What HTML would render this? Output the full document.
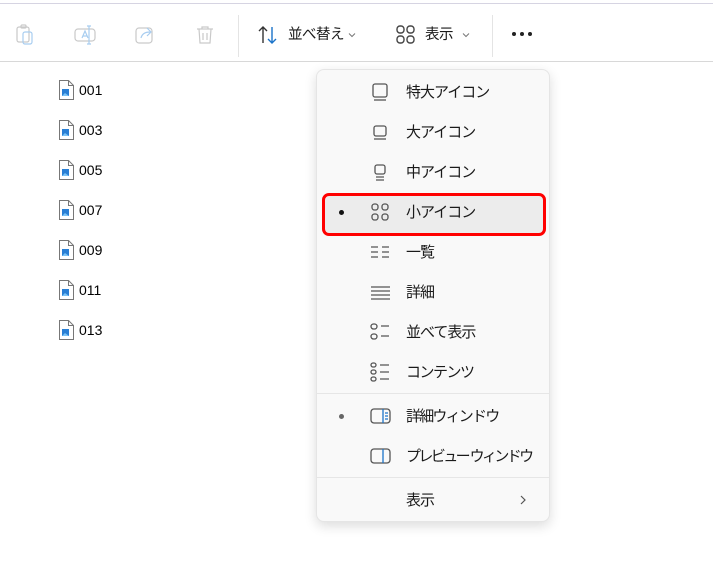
<!DOCTYPE html>
<html><head><meta charset="utf-8"><style>
body{margin:0;width:713px;height:566px;background:#fff;font-family:"Liberation Sans","Noto Sans CJK JP",sans-serif;position:relative;overflow:hidden;color:#1a1a1a}
.abs{position:absolute}
.t{font-size:14.5px;line-height:20px;letter-spacing:-0.5px}
.file{position:absolute;left:58px;font-size:14px;color:#000}
.file svg{position:absolute;left:0;top:-1px}
.file span{position:absolute;left:21px;top:0;line-height:18px}
.mi{position:absolute;left:406px;font-size:15px;line-height:20px;color:#1a1a1a;letter-spacing:-1px;white-space:nowrap}
.ic{position:absolute;left:370px}
</style></head><body>
<div class="abs" style="left:0;top:3px;width:713px;height:1px;background:#d6d4e2"></div>
<div class="abs" style="left:0;top:61px;width:713px;height:1px;background:#d8d8d8"></div>
<div class="abs" style="left:238px;top:15px;width:1px;height:42px;background:#e4e4e4"></div>
<div class="abs" style="left:492px;top:15px;width:1px;height:42px;background:#e4e4e4"></div>
<svg class="abs" style="left:15px;top:24px" width="22" height="22" viewBox="0 0 22 22" fill="none" stroke="#c9c9c9" stroke-width="1.2"><rect x="2" y="3" width="12" height="15" rx="2"/><rect x="6" y="1" width="5" height="3" rx="1"/><rect x="8" y="8" width="9" height="12" rx="2" stroke="#a8cdf0"/></svg>
<svg class="abs" style="left:74px;top:24px" width="22" height="22" viewBox="0 0 22 22" fill="none" stroke="#c9c9c9" stroke-width="1.2"><rect x="1" y="5" width="20" height="12" rx="3"/><path d="M8 14l3-7 3 7M9 12h4" stroke="#a8cdf0"/><path d="M15 2v18M13 2h4M13 20h4" stroke="#a8cdf0"/></svg>
<svg class="abs" style="left:134px;top:24px" width="22" height="22" viewBox="0 0 22 22" fill="none" stroke="#c9c9c9" stroke-width="1.2"><rect x="2" y="4" width="16" height="15" rx="3"/><path d="M7 14c1-4 4-6 9-6M13 4l4 4-4 4" stroke="#a8cdf0"/></svg>
<svg class="abs" style="left:194px;top:24px" width="22" height="22" viewBox="0 0 22 22" fill="none" stroke="#c9c9c9" stroke-width="1.2"><path d="M3 5h16M8 5V3h6v2M5 5l1 14h10l1-14M9 9v7M13 9v7"/></svg>
<svg class="abs" style="left:257px;top:24px" width="22" height="22" viewBox="0 0 22 22" fill="none" stroke-width="1.4"><path d="M6 19V3M2 7l4-4 4 4" stroke="#333"/><path d="M15 3v16M11 15l4 4 4-4" stroke="#1a73c9"/></svg>
<div class="abs t" style="left:288px;top:25px">並べ替え</div>
<svg class="abs" style="left:348px;top:32px" width="8" height="6" viewBox="0 0 8 6" fill="none" stroke="#777" stroke-width="1"><path d="M1 1.5l3 3 3-3"/></svg>
<svg class="abs" style="left:395px;top:24px" width="22" height="22" viewBox="0 0 22 22" fill="none" stroke="#444" stroke-width="1.4"><rect x="2" y="2" width="7" height="7" rx="3"/><rect x="12" y="2" width="7" height="7" rx="3"/><rect x="2" y="12" width="7" height="7" rx="3"/><rect x="12" y="12" width="7" height="7" rx="3"/></svg>
<div class="abs t" style="left:425px;top:25px">表示</div>
<svg class="abs" style="left:462px;top:32px" width="8" height="6" viewBox="0 0 8 6" fill="none" stroke="#777" stroke-width="1"><path d="M1 1.5l3 3 3-3"/></svg>
<svg class="abs" style="left:511px;top:31px" width="24" height="6"><circle cx="3" cy="3" r="2" fill="#222"/><circle cx="11" cy="3" r="2" fill="#222"/><circle cx="19" cy="3" r="2" fill="#222"/></svg>
<div class="file" style="top:81px"><svg width="18" height="20" viewBox="0 0 18 20"><path d="M1.5 .5h9l5 5v14h-14z" fill="#fff" stroke="#777"/><path d="M10.5 .5v5h5" fill="none" stroke="#777"/><rect x="4" y="9" width="7" height="7" fill="#2a7fd4"/><path d="M4 16l3-3 4 3z" fill="#7cc4f5"/></svg><span>001</span></div>
<div class="file" style="top:121px"><svg width="18" height="20" viewBox="0 0 18 20"><path d="M1.5 .5h9l5 5v14h-14z" fill="#fff" stroke="#777"/><path d="M10.5 .5v5h5" fill="none" stroke="#777"/><rect x="4" y="9" width="7" height="7" fill="#2a7fd4"/><path d="M4 16l3-3 4 3z" fill="#7cc4f5"/></svg><span>003</span></div>
<div class="file" style="top:161px"><svg width="18" height="20" viewBox="0 0 18 20"><path d="M1.5 .5h9l5 5v14h-14z" fill="#fff" stroke="#777"/><path d="M10.5 .5v5h5" fill="none" stroke="#777"/><rect x="4" y="9" width="7" height="7" fill="#2a7fd4"/><path d="M4 16l3-3 4 3z" fill="#7cc4f5"/></svg><span>005</span></div>
<div class="file" style="top:201px"><svg width="18" height="20" viewBox="0 0 18 20"><path d="M1.5 .5h9l5 5v14h-14z" fill="#fff" stroke="#777"/><path d="M10.5 .5v5h5" fill="none" stroke="#777"/><rect x="4" y="9" width="7" height="7" fill="#2a7fd4"/><path d="M4 16l3-3 4 3z" fill="#7cc4f5"/></svg><span>007</span></div>
<div class="file" style="top:241px"><svg width="18" height="20" viewBox="0 0 18 20"><path d="M1.5 .5h9l5 5v14h-14z" fill="#fff" stroke="#777"/><path d="M10.5 .5v5h5" fill="none" stroke="#777"/><rect x="4" y="9" width="7" height="7" fill="#2a7fd4"/><path d="M4 16l3-3 4 3z" fill="#7cc4f5"/></svg><span>009</span></div>
<div class="file" style="top:281px"><svg width="18" height="20" viewBox="0 0 18 20"><path d="M1.5 .5h9l5 5v14h-14z" fill="#fff" stroke="#777"/><path d="M10.5 .5v5h5" fill="none" stroke="#777"/><rect x="4" y="9" width="7" height="7" fill="#2a7fd4"/><path d="M4 16l3-3 4 3z" fill="#7cc4f5"/></svg><span>011</span></div>
<div class="file" style="top:321px"><svg width="18" height="20" viewBox="0 0 18 20"><path d="M1.5 .5h9l5 5v14h-14z" fill="#fff" stroke="#777"/><path d="M10.5 .5v5h5" fill="none" stroke="#777"/><rect x="4" y="9" width="7" height="7" fill="#2a7fd4"/><path d="M4 16l3-3 4 3z" fill="#7cc4f5"/></svg><span>013</span></div>
<div class="abs" style="left:316px;top:69px;width:234px;height:453px;background:#f9f9f9;border:1px solid #e5e5e5;border-radius:8px;box-shadow:0 4px 12px rgba(0,0,0,.14);box-sizing:border-box"></div>
<div class="abs" style="left:317px;top:393px;width:232px;height:1px;background:#e6e6e6"></div>
<div class="abs" style="left:317px;top:477px;width:232px;height:1px;background:#e6e6e6"></div>
<div class="abs" style="left:322px;top:193px;width:224px;height:43px;background:#ececec;border:3.5px solid #f00;border-radius:7px;box-sizing:border-box"></div>
<div class="abs" style="left:339px;top:210px;width:5px;height:5px;border-radius:50%;background:#111"></div>
<div class="abs" style="left:339px;top:414px;width:5px;height:5px;border-radius:50%;background:#666"></div>
<svg class="ic" style="top:82px" width="20" height="20" viewBox="0 0 20 20" fill="none" stroke="#555" stroke-width="1.3"><rect x="3" y="2" width="14" height="13" rx="2"/><path d="M4 18h12"/></svg>
<svg class="ic" style="top:122px" width="20" height="20" viewBox="0 0 20 20" fill="none" stroke="#555" stroke-width="1.3"><rect x="4" y="4" width="12" height="10" rx="2"/><path d="M4 17h12"/></svg>
<svg class="ic" style="top:162px" width="20" height="20" viewBox="0 0 20 20" fill="none" stroke="#555" stroke-width="1.3"><rect x="5" y="3" width="10" height="9" rx="2"/><path d="M6 15h8M6 18h8"/></svg>
<svg class="ic" style="top:202px" width="20" height="20" viewBox="0 0 20 20" fill="none" stroke="#555" stroke-width="1.3"><rect x="2" y="2" width="6" height="6" rx="2.5"/><rect x="12" y="2" width="6" height="6" rx="2.5"/><rect x="2" y="12" width="6" height="6" rx="2.5"/><rect x="12" y="12" width="6" height="6" rx="2.5"/></svg>
<svg class="ic" style="top:242px" width="20" height="20" viewBox="0 0 20 20" fill="none" stroke="#555" stroke-width="1.3"><path d="M1 5h7M1 10h7M1 15h7M12 5h7M12 10h7M12 15h7"/></svg>
<svg class="ic" style="top:282px" width="20" height="20" viewBox="0 0 20 20" fill="none" stroke="#555" stroke-width="1.3"><path d="M1 5h19M1 9h19M1 13h19M1 17h19"/></svg>
<svg class="ic" style="top:322px" width="20" height="20" viewBox="0 0 20 20" fill="none" stroke="#555" stroke-width="1.3"><rect x="1" y="2" width="6" height="5" rx="2.5"/><rect x="1" y="12" width="6" height="5" rx="2.5"/><path d="M11 4h8M11 14h8"/></svg>
<svg class="ic" style="top:362px" width="20" height="20" viewBox="0 0 20 20" fill="none" stroke="#555" stroke-width="1.3"><rect x="1" y="1" width="5" height="4" rx="2"/><rect x="1" y="8" width="5" height="4" rx="2"/><rect x="1" y="15" width="5" height="4" rx="2"/><path d="M10 3h9M10 10h9M10 17h9"/></svg>
<svg class="ic" style="top:406px" width="22" height="20" viewBox="0 0 22 20" fill="none" stroke-width="1.3"><rect x="1" y="3" width="19" height="14" rx="3" stroke="#555"/><path d="M13 3v14" stroke="#1a73c9"/><path d="M15 7h3M15 10h3M15 13h3" stroke="#1a73c9"/></svg>
<svg class="ic" style="top:446px" width="22" height="20" viewBox="0 0 22 20" fill="none" stroke-width="1.3"><rect x="1" y="3" width="19" height="14" rx="3" stroke="#555"/><path d="M13 3v14" stroke="#1a73c9"/></svg>
<div class="mi" style="top:83px">特大アイコン</div>
<div class="mi" style="top:123px">大アイコン</div>
<div class="mi" style="top:163px">中アイコン</div>
<div class="mi" style="top:203px">小アイコン</div>
<div class="mi" style="top:243px">一覧</div>
<div class="mi" style="top:283px">詳細</div>
<div class="mi" style="top:323px">並べて表示</div>
<div class="mi" style="top:363px;letter-spacing:-1.5px">コンテンツ</div>
<div class="mi" style="top:407px;letter-spacing:-1.8px">詳細ウィンドウ</div>
<div class="mi" style="top:447px;letter-spacing:-2.6px">プレビュー ウィンドウ</div>
<div class="mi" style="top:491px">表示</div>
<svg class="abs" style="left:518px;top:494px" width="10" height="12" viewBox="0 0 10 12" fill="none" stroke="#555" stroke-width="1.2"><path d="M3 2l4 4-4 4"/></svg>
</body></html>
